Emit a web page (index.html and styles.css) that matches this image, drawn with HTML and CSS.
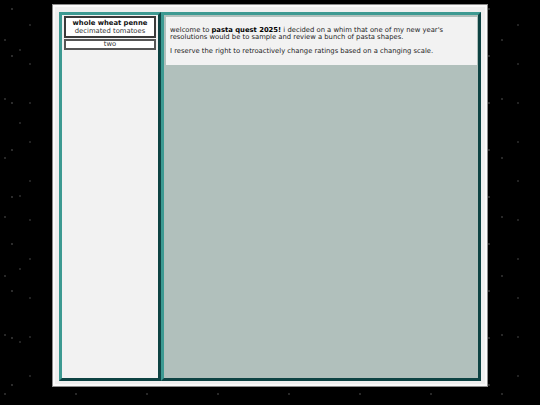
FILE: index.html
```html
<!DOCTYPE html>
<html>
<head>
<meta charset="utf-8">
<title>pasta quest 2025</title>
<link rel="stylesheet" href="styles.css">
</head>
<body>
<div class="frame">
  <div class="layout">
    <aside class="sidebar">
      <div class="entry">
        <div class="entry-title">whole wheat penne</div>
        <div class="entry-sub">decimated tomatoes</div>
      </div>
      <div class="entry-tag">two</div>
    </aside>
    <main class="main">
      <div class="intro">
        <p>welcome to <b>pasta quest 2025!</b> i decided on a whim that one of my new year's resolutions would be to sample and review a bunch of pasta shapes.</p>
        <p>I reserve the right to retroactively change ratings based on a changing scale.</p>
      </div>
    </main>
  </div>
</div>
</body>
</html>
```
FILE: styles.css
```css
html, body {
  margin: 0;
  padding: 0;
}
body {
  width: 540px;
  height: 405px;
  overflow: hidden;
  font-family: "DejaVu Sans", Verdana, sans-serif;
  color: #222;
  background-color: #000;
  background-image:
    radial-gradient(circle at 12px 9px, #4a4a4a 0.5px, transparent 1px),
    radial-gradient(circle at 30px 25px, #3a3a3a 0.5px, transparent 1px),
    radial-gradient(circle at 5px 40px, #444 0.5px, transparent 1px),
    radial-gradient(circle at 44px 17px, #333 0.5px, transparent 1px),
    radial-gradient(circle at 20px 50px, #3c3c3c 0.5px, transparent 1px),
    radial-gradient(circle at 70px 12px, #2e2e2e 0.5px, transparent 1px);
  background-size: 53px 47px, 61px 39px, 71px 59px, 43px 67px, 89px 73px, 97px 83px;
}
.frame {
  box-sizing: border-box;
  width: 436px;
  height: 383px;
  margin: 4px 0 0 52px;
  border: 1px solid #8c8c8c;
  box-shadow: inset 0 0 0 2px #fafafa;
  background: #efefef;
  padding: 7px 6px 5px 6px;
}
.layout {
  display: grid;
  grid-template-columns: 102px 1fr;
  height: 100%;
}
.sidebar, .main {
  border: 3px solid;
  border-color: #3d9a92 #0e4343 #0e4343 #3d9a92;
  box-sizing: border-box;
}
.sidebar {
  background: #f2f2f2;
  padding: 1px 2px;
}
.main {
  background: #b1c0bc;
  padding: 2px 1px 0 2px;
}
.entry {
  border: 2px solid #3a3a3a;
  background: #fff;
  text-align: center;
  font-size: 6.8px;
  line-height: 8px;
  padding: 1px 0 1px;
}
.entry-title {
  font-weight: bold;
  color: #111;
}
.entry-sub {
  color: #333;
}
.entry-tag {
  margin-top: 1px;
  border: 2px solid #555;
  background: #fff;
  text-align: center;
  font-size: 6.8px;
  line-height: 7px;
  color: #333;
  padding: 0;
}
.intro {
  background: #f2f2f2;
  padding: 3px 4px;
  font-size: 6.8px;
  line-height: 7.6px;
  color: #222;
}
.intro p {
  margin: 6.5px 0;
}
.intro b {
  color: #000;
}
```
